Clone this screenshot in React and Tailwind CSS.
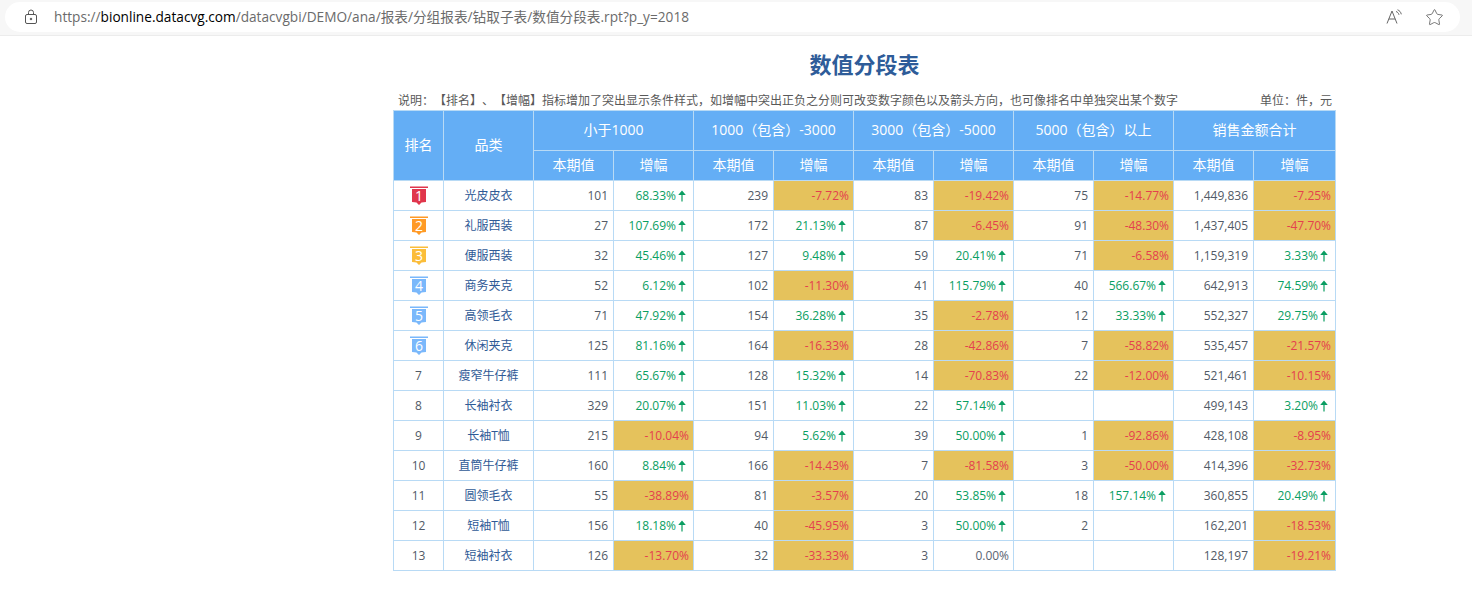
import { Star } from "lucide-react";

const font = { fontFamily: '"Open Sans", "Noto Sans CJK SC", sans-serif' };

const rows = [
  ["光皮皮衣", "101", "68.33", "239", "-7.72", "83", "-19.42", "75", "-14.77", "1,449,836", "-7.25"],
  ["礼服西装", "27", "107.69", "172", "21.13", "87", "-6.45", "91", "-48.30", "1,437,405", "-47.70"],
  ["便服西装", "32", "45.46", "127", "9.48", "59", "20.41", "71", "-6.58", "1,159,319", "3.33"],
  ["商务夹克", "52", "6.12", "102", "-11.30", "41", "115.79", "40", "566.67", "642,913", "74.59"],
  ["高领毛衣", "71", "47.92", "154", "36.28", "35", "-2.78", "12", "33.33", "552,327", "29.75"],
  ["休闲夹克", "125", "81.16", "164", "-16.33", "28", "-42.86", "7", "-58.82", "535,457", "-21.57"],
  ["瘦窄牛仔裤", "111", "65.67", "128", "15.32", "14", "-70.83", "22", "-12.00", "521,461", "-10.15"],
  ["长袖衬衣", "329", "20.07", "151", "11.03", "22", "57.14", "", "", "499,143", "3.20"],
  ["长袖T恤", "215", "-10.04", "94", "5.62", "39", "50.00", "1", "-92.86", "428,108", "-8.95"],
  ["直筒牛仔裤", "160", "8.84", "166", "-14.43", "7", "-81.58", "3", "-50.00", "414,396", "-32.73"],
  ["圆领毛衣", "55", "-38.89", "81", "-3.57", "20", "53.85", "18", "157.14", "360,855", "20.49"],
  ["短袖T恤", "156", "18.18", "40", "-45.95", "3", "50.00", "2", "", "162,201", "-18.53"],
  ["短袖衬衣", "126", "-13.70", "32", "-33.33", "3", "0.00", "", "", "128,197", "-19.21"],
];

const badgeColors = ["#e0364c", "#ff9a26", "#fbbd3a", "#7ab8fb", "#7ab8fb", "#7ab8fb"];
const groups = ["小于1000", "1000（包含）-3000", "3000（包含）-5000", "5000（包含）以上", "销售金额合计"];

function Badge({ n }) {
  const color = badgeColors[n - 1];
  return (
    <svg width="18" height="20" viewBox="0 0 18 20" className="mx-auto block">
      <rect x="0" y="0.500" width="18" height="1.500" fill={color} />
      <path d="M2 3H16V16L11.500 16.500L9 19L6.500 16.500L2 16Z" fill={color} />
      <text x="9" y="14.500" textAnchor="middle" fontSize="14" fill="#fff" fontFamily="Open Sans, sans-serif">
        {n}
      </text>
    </svg>
  );
}

function UpArrow() {
  return (
    <svg width="8" height="12" viewBox="0 0 8 12" className="ml-[2px] inline-block align-[-2px]">
      <path d="M4 0.500L7.800 5H4.600V11.500H3.400V5H0.200Z" fill="#0a9e62" />
    </svg>
  );
}

function Pct({ value }) {
  if (value === "") return <td className="border border-[#b8daf5]" />;
  if (value === "0.00") {
    return <td className="border border-[#b8daf5] pr-[4px] text-right text-[#5a6472]">0.00%</td>;
  }
  if (value.startsWith("-")) {
    return <td className="border border-[#b8daf5] bg-[#e5c25c] pr-[4px] text-right text-[#e4404e]">{value}%</td>;
  }
  return (
    <td className="border border-[#b8daf5] pr-[7px] text-right text-[#0a9e62]">
      {value}%<UpArrow />
    </td>
  );
}

export default function App() {
  return (
    <div className="h-[592px] w-[1472px] overflow-hidden bg-white [text-spacing-trim:space-all]" style={font}>
      <div className="h-[36px] border-b border-[#ececec] bg-[#f7f7f7] pl-[5px] pr-[12px] pt-[2px]">
        <div className="flex h-[30px] items-center rounded-full bg-white pl-[19px] pr-[16px]">
          <svg width="14" height="16" viewBox="0 0 14 16" fill="none" stroke="#555" strokeWidth="1">
            <rect x="1.500" y="5.500" width="11" height="9" rx="1.500" />
            <path d="M4.500 5.500V3.500a2.500 2.500 0 0 1 5 0V5.500" />
            <circle cx="7" cy="10" r="0.800" fill="#555" />
          </svg>
          <div className="ml-[16px] flex-1 text-[13.66px] text-[#6b6b6b]">
            https://<span className="text-black">bionline.datacvg.com</span>/datacvgbi/DEMO/ana/报表/分组报表/钻取子表/数值分段表.rpt?p_y=2018
          </div>
          <svg width="18" height="16" viewBox="0 0 18 16" fill="none" stroke="#666" strokeWidth="1">
            <path d="M1 14.500L6 2L11 14.500M2.800 10H9.200" />
            <path d="M10 2.500C11.500 3 12.500 4 13 5.800M11.500 0.800C13.500 1.500 14.800 3 15.300 5.300" />
          </svg>
          <Star size={19} strokeWidth={1} color="#555" className="ml-[21px]" />
        </div>
      </div>

      <div className="ml-[393px] w-[943px]">
        <h1 className="mt-[13px] h-[30px] text-center text-[22px] font-bold leading-[30px] text-[#2e5c99]">数值分段表</h1>
        <div className="mt-[7px] flex h-[24px] items-end justify-between pb-[1px] pl-[5px] pr-[4px] text-[12px] leading-[16px] text-[#595959]">
          <span>说明：【排名】、【增幅】指标增加了突出显示条件样式，如增幅中突出正负之分则可改变数字颜色以及箭头方向，也可像排名中单独突出某个数字</span>
          <span>单位：件，元</span>
        </div>
        <table className="w-[943px] table-fixed border-collapse text-[12px] text-[#525a66]">
          <colgroup>
            <col className="w-[50px]" />
            <col className="w-[90px]" />
            {Array.from({ length: 9 }, (_, i) => (
              <col key={i} className="w-[80px]" />
            ))}
            <col className="w-[82px]" />
          </colgroup>
          <thead className="bg-[#64aef5] text-white">
            <tr className="h-[40px]">
              <th rowSpan={2} className="border border-[#b8daf5] pb-[2px] text-[14px] font-normal">排名</th>
              <th rowSpan={2} className="border border-[#b8daf5] pb-[2px] text-[14px] font-normal">品类</th>
              {groups.map((g) => (
                <th key={g} colSpan={2} className="border border-[#b8daf5] pb-[2px] text-[14px] font-normal">{g}</th>
              ))}
            </tr>
            <tr className="h-[30px]">
              {groups.map((g) => [
                <th key={g + "a"} className="border border-[#b8daf5] pb-[2px] text-[14px] font-normal">本期值</th>,
                <th key={g + "b"} className="border border-[#b8daf5] pb-[2px] text-[14px] font-normal">增幅</th>,
              ])}
            </tr>
          </thead>
          <tbody>
            {rows.map((r, i) => (
              <tr key={r[0]} className="h-[30px]">
                <td className="border border-[#b8daf5] text-center">{i < 6 ? <Badge n={i + 1} /> : i + 1}</td>
                <td className="border border-[#b8daf5] text-center text-[#2f5a96]">{r[0]}</td>
                {[1, 3, 5, 7, 9].map((k) => [
                  <td key={k} className="border border-[#b8daf5] pr-[5px] text-right">{r[k]}</td>,
                  <Pct key={k + "p"} value={r[k + 1]} />,
                ])}
              </tr>
            ))}
          </tbody>
        </table>
      </div>
    </div>
  );
}
